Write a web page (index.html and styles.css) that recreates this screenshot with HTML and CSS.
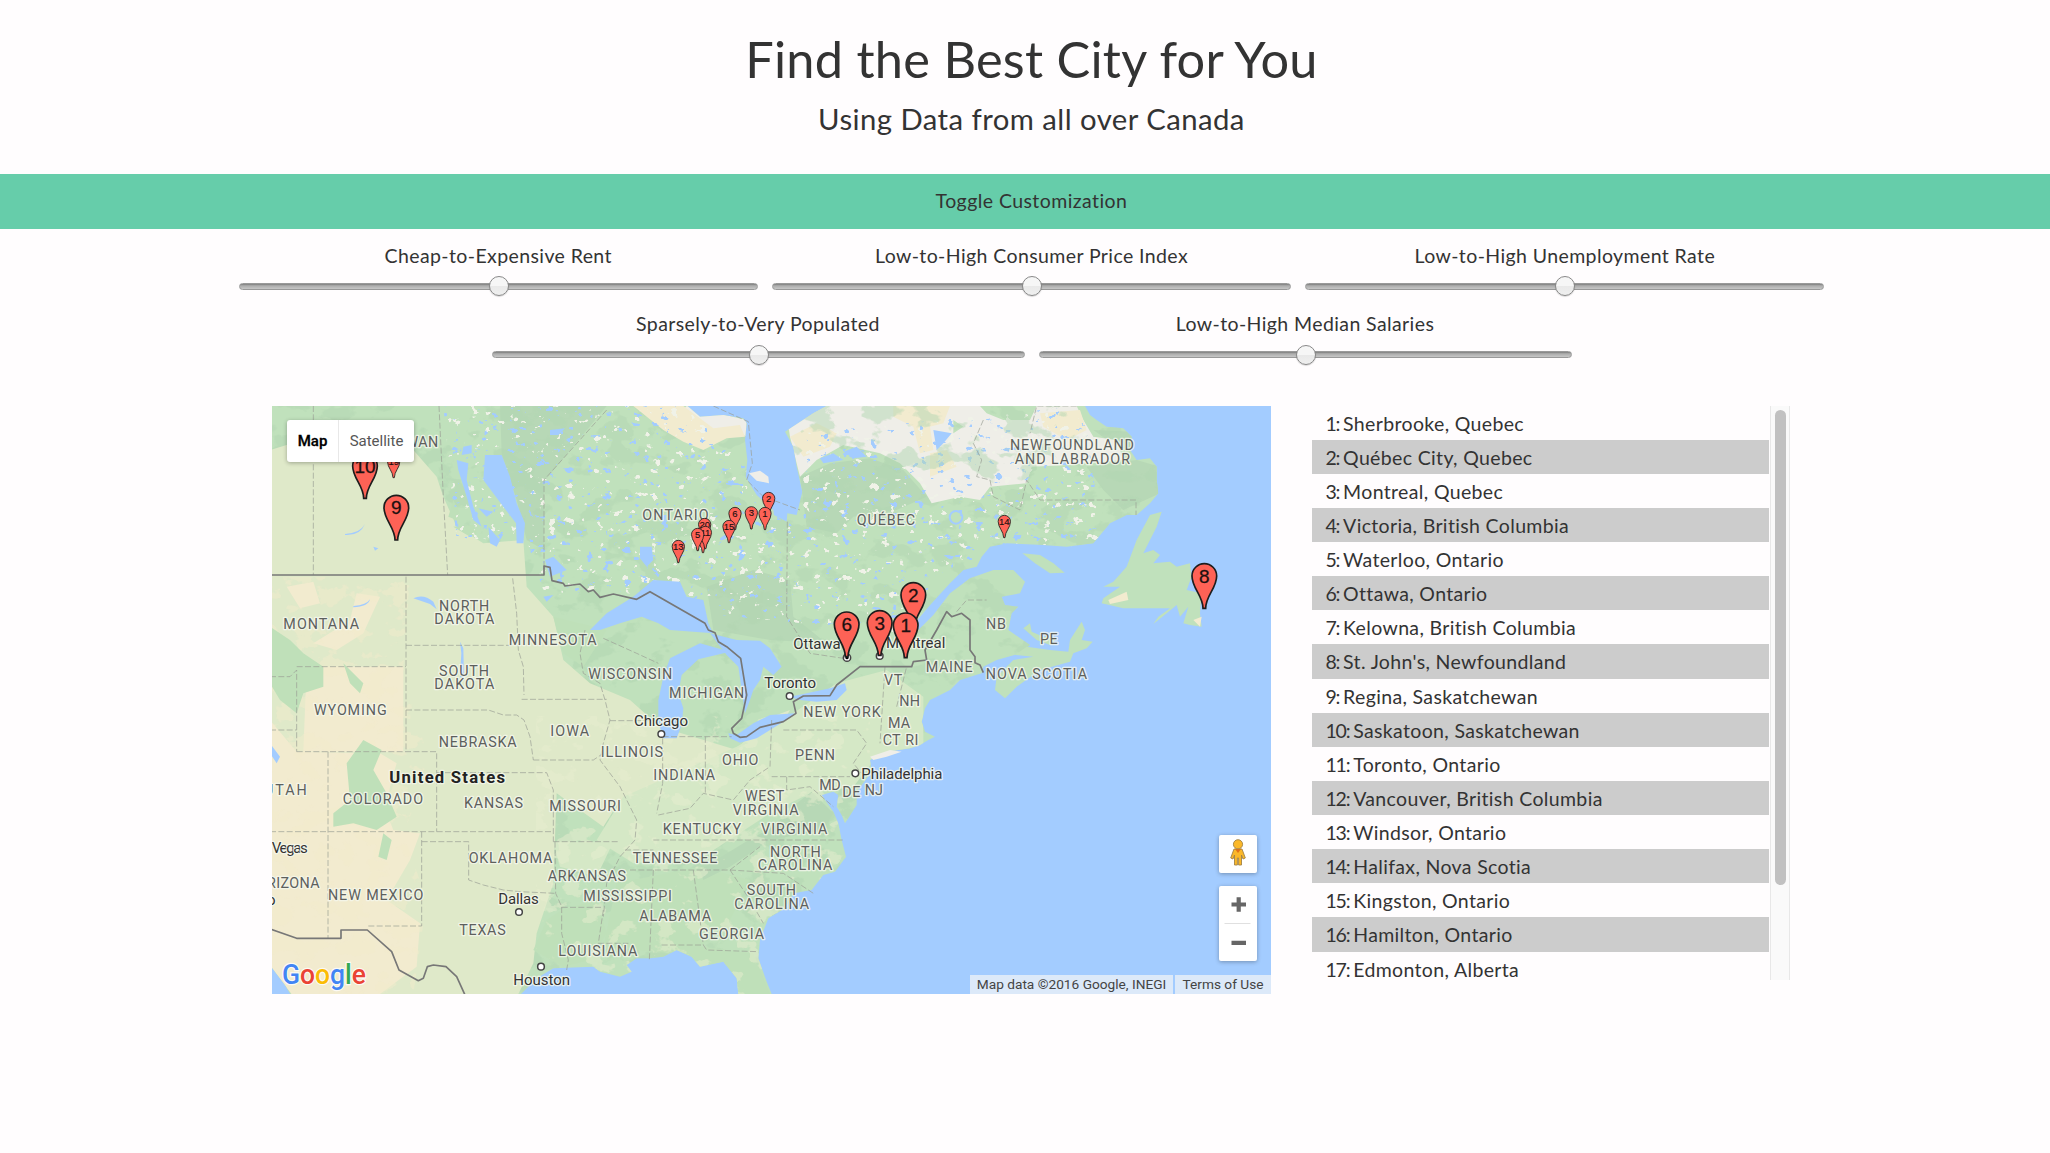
FILE: index.html
```html
<!DOCTYPE html>
<html lang="en">
<head>
<meta charset="utf-8">
<title>Find the Best City for You</title>
<link rel="stylesheet" href="styles.css">
</head>
<body>
<header class="header">
  <h1 class="title">Find the Best City for You</h1>
  <h2 class="subtitle">Using Data from all over Canada</h2>
</header>
<div class="toggle">Toggle Customization</div>
<section class="sliders">
  <div class="slider-row">
    <div class="slider"><span>Cheap-to-Expensive Rent</span><div class="track"><i class="thumb"></i></div></div>
    <div class="slider"><span>Low-to-High Consumer Price Index</span><div class="track"><i class="thumb"></i></div></div>
    <div class="slider"><span>Low-to-High Unemployment Rate</span><div class="track"><i class="thumb"></i></div></div>
  </div>
  <div class="slider-row wide">
    <div class="slider"><span>Sparsely-to-Very Populated</span><div class="track"><i class="thumb"></i></div></div>
    <div class="slider"><span>Low-to-High Median Salaries</span><div class="track"><i class="thumb"></i></div></div>
  </div>
</section>
<main class="main">
  <div class="map">
    <svg class="map-svg" viewBox="6 18 2997 1764" preserveAspectRatio="none">
      <defs>
        <clipPath id="land"><path d="M0,0L1245,0 1255,20 1290,50 1360,45 1420,55 1430,70 1425,120 1432,180 1427,230 1460,285 1510,330 1512,345 1550,365 1552,340 1580,345 1597,275 1580,200 1570,140 1545,95 1630,40 1670,18 2445,18 2460,45 2480,60 2510,80 2560,85 2585,110 2580,150 2600,180 2640,175 2660,200 2660,240 2665,280 2640,310 2600,345 2570,345 2520,370 2470,430 2390,440 2320,435 2210,430 2160,440 2135,470 2120,500 2080,510 2040,550 1980,615 1930,675 1945,690 1990,645 2040,580 2100,535 2170,510 2230,510 2265,545 2250,580 2195,590 2205,615 2245,620 2225,640 2215,690 2280,735 2250,760 2180,780 2140,800 2135,820 2070,840 2040,870 2000,890 1980,900 1965,925 1955,965 1965,995 1995,1010 1975,1020 1950,1035 1920,1045 1850,1055 1800,1080 1805,1115 1760,1175 1760,1215 1725,1270 1715,1245 1700,1220 1705,1185 1690,1175 1655,1185 1690,1235 1705,1270 1715,1320 1728,1370 1695,1415 1660,1425 1625,1470 1570,1480 1545,1525 1495,1555 1470,1620 1465,1675 1490,1745 1505,1782 1405,1782 1400,1735 1360,1685 1290,1700 1265,1670 1220,1650 1180,1670 1140,1675 1100,1675 1070,1695 1085,1715 1050,1730 990,1715 970,1700 850,1705 800,1735 745,1790 65,1790 45,1755 0,1695Z"/></clipPath>
        <clipPath id="north"><path d="M520,18H1240L1430,200 1500,340 1600,380 1600,100 2440,18 2500,440 2000,520 1900,700 1300,640 1000,560 830,600 770,420 560,420Z"/></clipPath>
        <clipPath id="west"><path d="M0,530H420L400,800 480,1100 400,1300 470,1500 430,1782H0Z"/></clipPath>
        <clipPath id="tundra"><path d="M1540,18H2540L2440,120 2280,230 2130,300 1980,270 1850,200 1700,170 1580,200Z"/></clipPath>
        <filter id="lakes" x="0" y="0" width="1" height="1" color-interpolation-filters="sRGB"><feTurbulence type="fractalNoise" baseFrequency=".035 .05" numOctaves="3" seed="4"/><feColorMatrix values="0 0 0 0 .64 0 0 0 0 .8 0 0 0 0 1 24 0 0 0 -16.4"/></filter>
        <filter id="rocks" x="0" y="0" width="1" height="1" color-interpolation-filters="sRGB"><feTurbulence type="fractalNoise" baseFrequency=".035 .04" numOctaves="3" seed="11"/><feColorMatrix values="0 0 0 0 .94 0 0 0 0 .95 0 0 0 0 .91 24 0 0 0 -16.6"/></filter>
        <filter id="woods" x="0" y="0" width="1" height="1" color-interpolation-filters="sRGB"><feTurbulence type="fractalNoise" baseFrequency=".01 .014" numOctaves="4" seed="7"/><feColorMatrix values="0 0 0 0 .7 0 0 0 0 .84 0 0 0 0 .7 18 0 0 0 -10"/></filter>
        <filter id="pale" x="0" y="0" width="1" height="1" color-interpolation-filters="sRGB"><feTurbulence type="fractalNoise" baseFrequency=".014 .018" numOctaves="4" seed="19"/><feColorMatrix values="0 0 0 0 .91 0 0 0 0 .93 0 0 0 0 .81 18 0 0 0 -10.6"/></filter>
        <filter id="sand" x="0" y="0" width="1" height="1" color-interpolation-filters="sRGB"><feTurbulence type="fractalNoise" baseFrequency=".014 .018" numOctaves="4" seed="23"/><feColorMatrix values="0 0 0 0 .95 0 0 0 0 .92 0 0 0 0 .8 18 0 0 0 -9.8"/></filter>
        <path id="pin" d="M-4,0C-4,-38-37,-60-37,-97A37,37 0 1 1 37,-97C37,-60 4,-38 4,0Z"/>
      </defs>
      <rect class="water" width="3010" height="1800"/>
      <g clip-path="url(#land)">
        <rect class="green" width="2700" height="1800"/>
        <path class="dark" d="M690,18H1010L822,245V450L770,420 740,300 695,160ZM1310,560L1450,510 1560,540 1570,650 1670,730 1500,720 1330,690ZM1590,230L1680,190 1800,175 1900,210 1970,290 1880,330 1750,350 1700,400 1610,380ZM2470,90L2585,95 2600,150 2540,140ZM2450,200L2600,180 2670,200 2670,280 2560,330 2500,270Z"/>
        <g opacity=".5"><rect width="2700" height="1800" filter="url(#woods)"/></g>
        <path class="plain" d="M0,150L130,110 250,150 430,150 500,230 520,290 560,380 640,430 760,420 770,560 850,650 880,780 960,850 1080,900 1170,980 1400,1050 1480,960 1560,930 1460,1100 1380,1170 1180,1180 1050,1200 1000,1280 860,1180 850,1450 800,1600 790,1690 745,1782 65,1782 0,1700Z"/>
        <path class="light" d="M1400,1040L1540,960 1700,850 1850,810 1960,890 1960,1040 1820,1070 1750,1160 1620,1180 1500,1240 1300,1370 1090,1390 980,1320 1060,1190ZM850,1325H1030L980,1430 870,1400Z"/>
        <path class="sand" d="M110,800L400,800 400,1055H100ZM0,960L80,1055 330,1060 380,1090 360,1160 350,1240 370,1290 450,1300 420,1380 350,1500 450,1570 440,1700 330,1782H65L0,1695ZM50,560L130,545 150,610 90,625ZM260,580L330,590 280,700 200,750 130,730 210,680 240,660Z"/>
        <g opacity=".5" clip-path="url(#west)"><rect width="600" height="1800" filter="url(#sand)"/></g>
        <path class="dark2" d="M0,680L60,720 100,760 160,800 160,860 100,880 80,940 30,900 0,850ZM280,1020L335,1050 310,1110 350,1180 380,1250 320,1290 250,1270 190,1280 190,1240 240,1200 230,1090ZM340,1300L365,1320 350,1380 325,1370ZM1040,1450L1290,1400 1440,1440 1380,1560 1290,1640 1450,1660 1500,1782H1400L1360,1685 1290,1700 1200,1660 1000,1640ZM875,1530L980,1500 1010,1600 960,1680 880,1700 790,1650 830,1560ZM550,300L570,340 560,360 535,350ZM550,380L610,375 620,400 600,410ZM220,790L280,850 270,880 240,850ZM850,650L1010,690 940,800 880,760Z"/>
        <path class="dark" d="M1290,1410L1420,1330 1510,1280 1580,1210 1625,1175 1690,1240 1660,1290 1500,1320 1380,1400 1300,1440Z"/>
        <path class="grey" d="M1250,18L1430,60 1430,110 1390,90 1320,95 1250,80 1230,40ZM1545,18H2420L2440,60 2470,110 2540,120 2560,180 2390,195 2285,200 2270,250 2160,260 2130,300 2070,290 1985,310 1950,250 1890,190 1830,160 1720,135 1640,180 1590,230 1560,110Z"/>
        <path class="sand" d="M1090,18H1240L1290,55 1330,85 1410,75 1425,110 1370,115 1300,150 1240,125 1180,90ZM1560,110L1640,70 1700,100 1680,140 1600,170ZM1870,18H2040L2020,70 1980,80 1990,150 1950,160 1930,80 1870,50ZM1980,160L2030,150 2060,200 1980,230ZM2310,40L2430,30 2450,90 2390,120 2320,80Z"/>
        <path class="green" d="M2130,18H2300L2280,60 2200,60 2150,40ZM2050,60L2080,80 2050,100Z"/>
        <g opacity=".5"><rect y="950" x="800" width="1000" height="840" filter="url(#pale)"/></g>
        <g clip-path="url(#north)"><rect x="500" width="2100" height="720" filter="url(#rocks)"/><rect x="500" width="2100" height="720" filter="url(#lakes)"/></g>
        <g clip-path="url(#tundra)"><rect x="1540" width="1000" height="330" filter="url(#woods)" opacity=".5"/></g>
      </g>
      <g class="green">
        <path d="M2257,460L2310,465 2350,490 2384,518 2340,520 2295,490Z"/>
        <path d="M2640,345L2675,335 2660,380 2620,460 2650,450 2670,465 2650,490 2700,485 2720,500 2760,490 2765,530 2750,570 2795,580 2790,640 2795,680 2760,675 2740,670 2755,620 2730,650 2720,615 2690,640 2650,672 2665,650 2700,625 2560,625 2495,610 2500,595 2550,560 2500,560 2530,545 2570,500 2600,420Z"/>
        <path d="M2180,830L2230,780 2290,770 2235,765 2270,740 2340,750 2395,755 2400,720 2435,665 2445,690 2435,720 2468,725 2450,745 2410,760 2400,785 2310,810 2240,860 2205,895 2175,870Z"/>
        <path d="M2260,685L2280,670 2285,695 2320,710 2360,715 2340,735 2300,720Z"/>
      </g>
      <path class="sand" d="M2515,600L2570,575 2575,600 2520,612ZM2770,660L2795,650 2790,680Z"/>
      <path class="grey" d="M1437,220L1470,212 1495,230 1497,250 1460,242ZM1800,1070L1860,1050 1895,1055 1850,1070 1810,1080Z"/>
      <g class="water">
        <path d="M960,690L1010,640 1090,590 1150,540 1230,545 1250,590 1300,600 1315,670 1330,700 1200,690 1165,670 1115,650 1050,670 990,690Z"/>
        <path d="M1165,900L1180,830 1200,775 1290,730 1380,755 1285,778 1235,825 1225,880 1240,925 1235,975 1220,1015 1180,1015 1165,965Z"/>
        <path d="M1320,700L1400,720 1470,722 1500,745 1535,800 1510,825 1480,800 1470,840 1450,870 1440,900 1425,940 1418,890 1405,800 1370,765Z"/>
        <path d="M1375,1000L1400,1005 1450,970 1500,945 1575,940 1540,965 1460,1015 1410,1028 1380,1015ZM1560,890L1610,880 1680,865 1725,850 1730,870 1700,900 1640,905 1590,900Z"/>
        <path d="M645,165L695,165 720,230 740,310 765,370 760,430 740,430 738,370 700,320 640,240ZM560,180L595,190 590,240 610,320 635,380 610,360 590,290 565,210ZM655,380L690,420 680,440 660,430ZM1110,440L1145,440 1150,480 1130,500 1110,475ZM580,140L605,135 605,160 575,165ZM625,325L670,335 650,350ZM825,480L850,470 890,510 840,530ZM820,590L850,585 830,605ZM0,1030L30,1070 20,1090 0,1060ZM840,90L885,85 865,105 840,105ZM1650,175L1690,160 1720,180 1660,190ZM1720,155L1760,140 1790,170 1750,175ZM1990,90L2045,100 2020,130 2000,150ZM250,618Q290,615 300,598Q295,620 250,622Z"/>
        <path d="M430,595Q460,580 490,605L500,628 480,612ZM570,725L580,745 582,840 570,830 574,760ZM310,440L325,445 315,452ZM225,402Q270,400 285,372Q270,408 225,405Z"/>
      </g>
      <circle cx="2058" cy="352" r="19" class="ring"/>
      <g class="states">
        <path d="M130,18V525M507,18L520,290 533,525M1010,30L822,240V498M408,530V1055M408,736H730M728,535L740,640 745,750 760,800 762,885M80,800H408M0,830H60L80,810V1055M0,990H80M80,1055H500V1295M174,1055V1615M0,1295H848M408,930H655L700,945 740,945 762,960 780,1010 790,1080M755,898H1010M790,1080H970L1000,1060M500,1118H830L850,1170V1325M455,1295V1578H290M455,1325H596V1440L640,1455 700,1470 750,1475 855,1480M850,1325H1050M855,1325L857,1480 875,1520V1600L895,1680 890,1710M875,1522H1000M1000,1530L985,1630H1075"/>
        <path d="M945,690L930,760 940,820 990,850 1005,900 1020,960 1000,1030 990,1080 1050,1160 1100,1260 1095,1320 1050,1370 1010,1450 1000,1550M1020,962H1165M1178,1015V1150L1160,1240M1306,1010V1180M1178,1010H1385M1165,1245L1260,1225 1300,1180 1390,1200 1440,1140 1500,1100 1505,960M1505,1130H1740M1150,1320H1725M1065,1350H1150M1080,1410H1380L1470,1340M1150,1410L1138,1680M1270,1410L1300,1635 1310,1650 1465,1655M1175,1635H1300M1380,1410L1440,1500 1480,1570M1380,1410L1540,1420 1630,1480M1540,990H1760L1790,1030 1750,1090 1775,1120M1552,365L1550,650 1620,760 1720,775M1845,800L1830,1030M1880,920L1910,800M1000,715L1100,760 1165,790M1550,1130V1170L1620,1160 1690,1220"/>
        <path d="M1330,18L1435,65 1447,190 1430,240 1480,290 1590,330M2140,60L2110,130 2135,180 2120,230 2160,240 2170,290 2250,330 2270,240 2310,300H2598V345M2060,635L2090,600 2150,600M2420,18H2300L2280,100"/>
      </g>
      <path class="border" d="M0,525H822V498L840,502 846,542 880,550 885,558 930,552 955,575 970,570 990,592 1030,582 1100,598 1140,575 1305,670 1315,690 1335,698 1345,725 1370,740 1412,775 1430,885 1415,955 1385,985 1390,1000 1410,1012 1430,1010 1470,982 1540,965 1578,940 1570,905 1600,888 1680,887 1700,855 1770,800H1925L1930,785 1970,780 1965,750 2000,690 2030,635 2045,650 2075,640 2100,660V750L2115,770V788L2130,795 2140,818M0,1587L80,1615H213V1590H292L365,1655 387,1710 445,1742 460,1735 472,1700 490,1695 528,1700 560,1730 585,1785"/>
      <g class="labels">
        <text x="155" y="141" textLength="350">SASKATCHEWAN</text><text x="40" y="687" textLength="227">MONTANA</text><text x="507" y="632" textLength="151">NORTH</text><text x="493" y="673" textLength="180">DAKOTA</text><text x="716" y="735" textLength="264">MINNESOTA</text><text x="507" y="828" textLength="150">SOUTH</text><text x="493" y="867" textLength="180">DAKOTA</text><text x="955" y="836" textLength="252">WISCONSIN</text><text x="1197" y="893" textLength="226">MICHIGAN</text><text x="1117" y="360" textLength="199">ONTARIO</text><text x="1760" y="374" textLength="175">QUÉBEC</text><text x="2220" y="151" textLength="372">NEWFOUNDLAND</text><text x="2234" y="192" textLength="346">AND LABRADOR</text><text x="2148" y="687" textLength="60">NB</text><text x="2310" y="733" textLength="53">PE</text><text x="1967" y="815" textLength="141">MAINE</text><text x="2147" y="836" textLength="304">NOVA SCOTIA</text><text x="1842" y="855" textLength="55">VT</text><text x="1888" y="919" textLength="62">NH</text><text x="1854" y="984" textLength="66">MA</text><text x="1838" y="1036" textLength="54">CT</text><text x="1906" y="1036" textLength="39">RI</text><text x="1600" y="951" textLength="232">NEW YORK</text>
        <text x="132" y="944" textLength="218">WYOMING</text><text x="506" y="1041" textLength="234">NEBRASKA</text><text x="841" y="1008" textLength="116">IOWA</text><text x="992" y="1071" textLength="187">ILLINOIS</text><text x="1356" y="1096" textLength="109">OHIO</text><text x="1150" y="1140" textLength="185">INDIANA</text><text x="1575" y="1080" textLength="120">PENN</text><text x="1648" y="1169" textLength="64">MD</text><text x="1717" y="1191" textLength="54">DE</text><text x="1784" y="1184" textLength="55">NJ</text><text x="-18" y="1185" textLength="128">UTAH</text><text x="218" y="1211" textLength="241">COLORADO</text><text x="582" y="1223" textLength="177">KANSAS</text><text x="838" y="1233" textLength="215">MISSOURI</text><text x="1425" y="1204" textLength="118">WEST</text><text x="1388" y="1245" textLength="198">VIRGINIA</text><text x="1178" y="1301" textLength="235">KENTUCKY</text><text x="1473" y="1301" textLength="199">VIRGINIA</text><text x="1088" y="1388" textLength="254">TENNESSEE</text><text x="1500" y="1370" textLength="152">NORTH</text><text x="1463" y="1411" textLength="224">CAROLINA</text><text x="596" y="1388" textLength="251">OKLAHOMA</text><text x="833" y="1443" textLength="235">ARKANSAS</text><text x="-38" y="1464" textLength="187">ARIZONA</text><text x="174" y="1500" textLength="286">NEW MEXICO</text><text x="940" y="1502" textLength="266">MISSISSIPPI</text><text x="1430" y="1485" textLength="148">SOUTH</text><text x="1393" y="1526" textLength="224">CAROLINA</text><text x="1108" y="1563" textLength="215">ALABAMA</text><text x="1287" y="1617" textLength="195">GEORGIA</text><text x="568" y="1606" textLength="139">TEXAS</text><text x="865" y="1668" textLength="237">LOUISIANA</text>
      </g>
      <g class="cities">
        <text x="1570" y="748" textLength="142">Ottawa</text><text x="1848" y="743" textLength="178">Montreal</text><text x="1483" y="865" textLength="155">Toronto</text><text x="1092" y="978" textLength="162">Chicago</text><text x="1774" y="1136" textLength="243">Philadelphia</text><text x="-61" y="1360" textLength="174">Las Vegas</text><text x="685" y="1512" textLength="121">Dallas</text><text x="730" y="1754" textLength="170">Houston</text><text x="-9" y="1515">o</text>
        <text class="country" x="358" y="1149" textLength="347">United States</text>
      </g>
      <g class="dots"><circle cx="1559" cy="888" r="10"/><circle cx="1174" cy="1002" r="10"/><circle cx="1756" cy="1120" r="10"/><circle cx="747" cy="1536" r="10"/><circle cx="813" cy="1700" r="10"/><circle cx="1731" cy="773" r="11"/><circle cx="1829" cy="768" r="10"/></g>
      <circle cx="1731" cy="773" r="5"/>
      <g class="pins">
        <g transform="translate(371 233) scale(.5)"><use href="#pin"/><text y="-77">19</text></g>
        <g transform="translate(285 295)"><use href="#pin"/><text y="-77">10</text></g>
        <g transform="translate(379 420)"><use href="#pin"/><text y="-77">9</text></g>
        <g transform="translate(1496 344) scale(.5)"><use href="#pin"/><text y="-77">2</text></g>
        <g transform="translate(1395 389) scale(.5)"><use href="#pin"/><text y="-77">6</text></g>
        <g transform="translate(1444 387) scale(.5)"><use href="#pin"/><text y="-77">3</text></g>
        <g transform="translate(1485 389) scale(.5)"><use href="#pin"/><text y="-77">1</text></g>
        <g transform="translate(1304 422) scale(.5)"><use href="#pin"/><text y="-77">20</text></g>
        <g transform="translate(1299 458) scale(.5)"><use href="#pin"/></g>
        <g transform="translate(1306 446) scale(.5)"><use href="#pin"/><text y="-77">11</text></g>
        <g transform="translate(1283 452) scale(.5)"><use href="#pin"/><text y="-77">5</text></g>
        <g transform="translate(1377 428) scale(.5)"><use href="#pin"/><text y="-77">15</text></g>
        <g transform="translate(1225 488) scale(.5)"><use href="#pin"/><text y="-77">13</text></g>
        <g transform="translate(2203 413) scale(.5)"><use href="#pin"/><text y="-77">14</text></g>
        <g transform="translate(1930 682)"><use href="#pin"/><text y="-77">2</text></g>
        <g transform="translate(1730 770)"><use href="#pin"/><text y="-77">6</text></g>
        <g transform="translate(1829 766)"><use href="#pin"/><text y="-77">3</text></g>
        <g transform="translate(1907 773)"><use href="#pin"/><text y="-77">1</text></g>
        <g transform="translate(2803 625)"><use href="#pin"/><text y="-77">8</text></g>
      </g>
      <text class="logo" x="36" y="1752" textLength="252" lengthAdjust="spacingAndGlyphs"><tspan fill="#4285f4">G</tspan><tspan fill="#ea4335">o</tspan><tspan fill="#fbbc05">o</tspan><tspan fill="#4285f4">g</tspan><tspan fill="#34a853">l</tspan><tspan fill="#ea4335">e</tspan></text>
    </svg>
    <div class="map-type"><b>Map</b><span>Satellite</span></div>
    <div class="controls">
      <div class="pegman"><svg width="16" height="27" viewBox="0 0 16 27"><path d="M4,10H12L15.3,19 13,20 11.5,16V26H8.6V19H7.4V26H4.5V16L3,20 .7,19Z" fill="#fbb829" stroke="#a08246" stroke-width=".9"/><path d="M5,10H11L8,14Z" fill="#e0701a"/><circle cx="8" cy="5.3" r="4.6" fill="#fbb829" stroke="#a08246" stroke-width=".9"/></svg></div>
      <div class="zoom"><svg width="38" height="75" viewBox="0 0 38 75"><path d="M12.500,18.500H27M19.700,11.300V25.700M12.500,56.800H27" stroke="#666" stroke-width="4.200"/><path d="M5.500,37.500H31.500" stroke="#e0e0e0"/></svg></div>
    </div>
    <div class="credits"><span class="data">Map data ©2016 Google, INEGI</span><span class="terms">Terms of Use</span></div>
  </div>
  <div class="panel">
    <ol class="cities-list">
      <li><span>1: </span>Sherbrooke, Quebec</li><li><span>2: </span>Québec City, Quebec</li><li><span>3: </span>Montreal, Quebec</li><li><span>4: </span>Victoria, British Columbia</li><li><span>5: </span>Waterloo, Ontario</li><li><span>6: </span>Ottawa, Ontario</li><li><span>7: </span>Kelowna, British Columbia</li><li><span>8: </span>St. John's, Newfoundland</li><li><span>9: </span>Regina, Saskatchewan</li><li><span>10: </span>Saskatoon, Saskatchewan</li><li><span>11: </span>Toronto, Ontario</li><li><span>12: </span>Vancouver, British Columbia</li><li><span>13: </span>Windsor, Ontario</li><li><span>14: </span>Halifax, Nova Scotia</li><li><span>15: </span>Kingston, Ontario</li><li><span>16: </span>Hamilton, Ontario</li><li><span>17: </span>Edmonton, Alberta</li>
    </ol>
    <div class="scrollbar"><div class="scroll-thumb"></div></div>
  </div>
</main>
</body>
</html>
```
FILE: styles.css
```css
* { box-sizing: border-box; }
body {
  margin: 0;
  height: 1153px;
  overflow: hidden;
  background: #fffdfe;
  color: #333;
  font: 19.5px/34px Lato, "Open Sans", sans-serif;
}
.header { height: 174px; padding: 24px 0 0 13px; text-align: center; }
.title { margin: 0; font-size: 50.5px; line-height: 70px; font-weight: 400; letter-spacing: .25px; }
.subtitle { margin: 5px 0 0; font-size: 29.3px; line-height: 40px; font-weight: 400; letter-spacing: .45px; }
.toggle { height: 54.5px; padding-left: 13px; background: #66cdaa; text-align: center; line-height: 54px; letter-spacing: .43px; }

.sliders { padding: 10.5px 0 0 13px; }
.slider-row { display: flex; justify-content: center; gap: 14px; height: 68.3px; }
.slider { width: 519.3px; text-align: center; }
.wide .slider { width: 533px; }
.slider span { display: block; height: 34px; letter-spacing: .4px; }
.track {
  display: flex;
  align-items: center;
  justify-content: center;
  height: 7.5px;
  margin-top: 9.5px;
  padding-left: 1px;
  border-radius: 3.5px;
  border: 1px solid #999;
  background: linear-gradient(#7c7c7c, #acacac 35%, #c6c6c6);
}
.thumb {
  flex: none;
  width: 20px;
  height: 20px;
  border: 1.3px solid #888;
  border-radius: 50%;
  background: linear-gradient(#f6f6f6 0 48%, #e9e9e9 52%, #efefef);
  box-shadow: 0 1px 1px rgba(0, 0, 0, .15);
}

.main { display: flex; gap: 41px; padding: 30px 0 0 272px; }
.map { position: relative; width: 999px; height: 588px; overflow: hidden; font-family: Roboto, sans-serif; }
.map-svg { display: block; width: 999px; height: 588px; }
.water { fill: #a3ccff; }
.green { fill: #c0e1bc; }
.dark { fill: #b7d8b6; }
.dark2 { fill: #bfe0b9; }
.plain { fill: #dfe9c9; }
.light { fill: #d5e8c6; }
.sand { fill: #f2ebcf; }
.grey { fill: #efeee8; }
.ring { fill: none; stroke: #a3ccff; stroke-width: 6; }
.states { fill: none; stroke: #9b9f96; stroke-opacity: .7; stroke-width: 3; stroke-dasharray: 18 7; }
.border { fill: none; stroke: #777; stroke-width: 5; stroke-linejoin: round; }
.labels, .cities { font-size: 43px; paint-order: stroke; stroke: rgba(245, 248, 238, .8); stroke-width: 8; stroke-linejoin: round; }
.labels { fill: #5d605d; font-weight: 400; }
.cities { fill: #333; font-weight: 400; font-size: 45px; }
.country { font-size: 50px; font-weight: 700; fill: #222; }
.dots { fill: #fff; stroke: #444; stroke-width: 4.5; }
.pins { fill: #fe6256; stroke: #1d1d1d; stroke-width: 5; }
.pins text { fill: #1d1010; stroke: #1d1010; stroke-width: .8; font-size: 57px; font-family: "Liberation Sans", sans-serif; text-anchor: middle; }
.logo { font: 500 83px Roboto, sans-serif; paint-order: stroke; stroke: rgba(255, 255, 255, .8); stroke-width: 7; }

.map-type {
  position: absolute;
  left: 15px;
  top: 14px;
  display: flex;
  height: 42px;
  background: #fff;
  border-radius: 3px;
  box-shadow: 0 1px 4px rgba(0, 0, 0, .3);
  font-size: 15px;
  line-height: 42px;
  text-align: center;
}
.map-type b { width: 51px; color: #000; font-weight: 500; -webkit-text-stroke: .3px; }
.map-type span { width: 76px; border-left: 1px solid #e8e8e8; color: #565656; }
.controls { position: absolute; right: 14px; bottom: 33px; display: grid; gap: 13px; }
.pegman, .zoom { display: flex; align-items: center; justify-content: center; width: 38px; background: #fff; border-radius: 2px; box-shadow: 0 1px 4px rgba(0, 0, 0, .3); }
.pegman { height: 38px; padding-bottom: 3px; }
.zoom { height: 75px; }
.credits { position: absolute; right: 0; bottom: 0; display: flex; gap: 2px; height: 19px; font-size: 13.7px; line-height: 18px; color: #444; text-align: center; }
.credits span { background: #dce9f9; white-space: nowrap; }
.data { width: 203px; }
.terms { width: 96px; }

.panel { display: flex; width: 478px; height: 574px; overflow: hidden; }
.cities-list { flex: none; width: 457px; margin: 0 1px 0 0; padding: 0; list-style: none; letter-spacing: .35px; }
.cities-list li { height: 34.14px; padding-left: 13.5px; line-height: 35px; }
.cities-list li:nth-child(even) { background: #ccc; }
.cities-list span { letter-spacing: -1.2px; }
.scrollbar { flex: none; width: 20px; padding: 4px 4px 0; border: solid #e8e8e8; border-width: 0 1px; background: #fafafa; }
.scroll-thumb { width: 11px; height: 475px; border-radius: 6px; background: #c1c1c1; }
```
